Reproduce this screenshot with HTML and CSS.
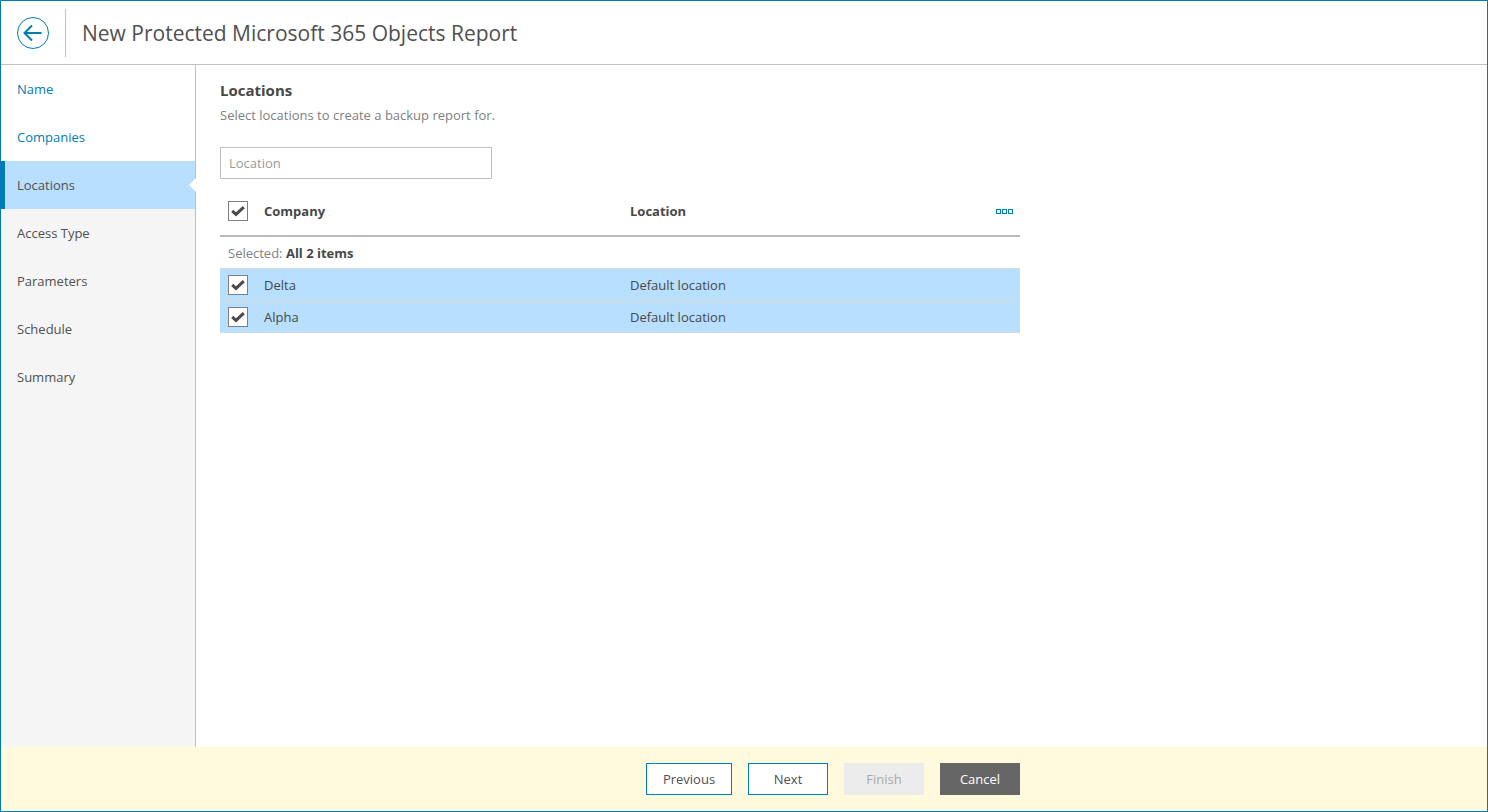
FILE: index.html
```html
<!DOCTYPE html>
<html>
<head lang="en">
    <meta charset="UTF-8">
    <title>New Protected Microsoft 365 Objects Report</title>

    <link rel="stylesheet" href="styles.css">
</head>
<body>

<div class="wizard">
    <div class="header">
        <div class="back">
            <svg width="32" height="32" viewBox="0 0 32 32">
                <circle cx="16" cy="16" r="15.5" fill="none" stroke="#007cb5" stroke-width="1"/>
                <path d="M8 16H24.5M15 8.5L7.5 16L15 23.5" fill="none" stroke="#007cb5" stroke-width="2"/>
            </svg>
        </div>
        <div class="title">New Protected Microsoft 365 Objects Report</div>
    </div>

    <div class="main">
        <div class="steps">
            <div class="step done">Name</div>
            <div class="step done">Companies</div>
            <div class="step active">Locations</div>
            <div class="step">Access Type</div>
            <div class="step">Parameters</div>
            <div class="step">Schedule</div>
            <div class="step">Summary</div>
        </div>

        <div class="content">
            <div class="heading">Locations</div>
            <div class="desc">Select locations to create a backup report for.</div>

            <div class="search">Location</div>

            <div class="grid">
                <div class="row head">
                    <div class="check-cell">
                        <span class="check">
                            <svg width="14" height="12" viewBox="0 0 14 12"><path d="M1.2 5.8L5 9.4L12.8 2.2" fill="none" stroke="#4a4a4a" stroke-width="3"/></svg>
                        </span>
                    </div>
                    <div class="col-company">Company</div>
                    <div class="col-location">Location</div>
                    <div class="col-menu">
                        <span class="dot"></span><span class="dot"></span><span class="dot"></span>
                    </div>
                </div>
                <div class="selected">Selected: <b>All 2 items</b></div>
                <div class="row item">
                    <div class="check-cell">
                        <span class="check">
                            <svg width="14" height="12" viewBox="0 0 14 12"><path d="M1.2 5.8L5 9.4L12.8 2.2" fill="none" stroke="#4a4a4a" stroke-width="3"/></svg>
                        </span>
                    </div>
                    <div class="col-company">Delta</div>
                    <div class="col-location">Default location</div>
                </div>
                <div class="row item">
                    <div class="check-cell">
                        <span class="check">
                            <svg width="14" height="12" viewBox="0 0 14 12"><path d="M1.2 5.8L5 9.4L12.8 2.2" fill="none" stroke="#4a4a4a" stroke-width="3"/></svg>
                        </span>
                    </div>
                    <div class="col-company">Alpha</div>
                    <div class="col-location">Default location</div>
                </div>
            </div>
        </div>
    </div>

    <div class="footer">
        <div class="buttons">
            <button class="btn prev">Previous</button>
            <button class="btn next">Next</button>
            <button class="btn finish">Finish</button>
            <button class="btn cancel">Cancel</button>
        </div>
    </div>
</div>

</body>
</html>
```

FILE: styles.css
```css
body, html {
    padding: 0;
    margin: 0;
}

body, html {
    width: 1488px;
    height: 812px;
    overflow: hidden;
}

body {
    font-family: "Open Sans", "Liberation Sans", sans-serif;
    font-size: 13px;
    color: #484848;
}

.wizard {
    width: 1488px;
    height: 812px;
    box-sizing: border-box;
    border: 1px solid #007cb5;
    display: flex;
    flex-direction: column;
    background-color: #fff;
}

.header {
    height: 64px;
    box-sizing: border-box;
    border-bottom: 1px solid #c0c0c0;
    display: flex;
    align-items: center;
    flex: none;
}

.back {
    width: 65px;
    height: 48px;
    box-sizing: border-box;
    padding: 8px 0 0 16px;
    border-right: 1px solid #c0c0c0;
    margin-top: 1px;
}

.back svg {
    display: block;
}

.title {
    font-size: 21px;
    color: #505050;
    margin-left: 16px;
    line-height: 30px;
}

.main {
    flex: 1;
    display: flex;
    min-height: 0;
}

.steps {
    width: 195px;
    box-sizing: border-box;
    border-right: 1px solid #c0c0c0;
    background-color: #f5f5f5;
    flex: none;
}

.step {
    height: 48px;
    line-height: 48px;
    padding-left: 16px;
    box-sizing: border-box;
    color: #505050;
}

.step.done {
    background-color: #fff;
    color: #007cb5;
}

.step.active {
    background-color: #b8dffe;
    border-left: 4px solid #007cb5;
    padding-left: 12px;
    position: relative;
    width: 194px;
}

/* little white notch pointing at the content */
.step.active:after {
    content: "";
    position: absolute;
    right: -1px;
    top: 17px;
    width: 0;
    height: 0;
    border-top: 7px solid transparent;
    border-bottom: 7px solid transparent;
    border-right: 7px solid #fff;
}

.content {
    flex: 1;
    padding: 14px 0 0 24px;
}

.heading {
    font-size: 15px;
    font-weight: 700;
    line-height: 22px;
    color: #484848;
}

.desc {
    color: #808080;
    line-height: 18px;
    margin-top: 5px;
}

.search {
    width: 272px;
    height: 32px;
    box-sizing: border-box;
    border: 1px solid #c0c0c0;
    margin-top: 23px;
    padding-left: 8px;
    line-height: 30px;
    color: #9a9a9a;
}

.grid {
    width: 800px;
    margin-top: 16px;
}

.row {
    display: flex;
    align-items: center;
}

.row.head {
    height: 42px;
    box-sizing: border-box;
    border-bottom: 2px solid #bdbdbd;
    font-weight: 700;
    padding-bottom: 8px;
}

.row.item {
    height: 32px;
    box-sizing: border-box;
    background-color: #b8dffe;
    border-bottom: 1px solid #d9d9d9;
}

.check-cell {
    width: 44px;
    padding-left: 8px;
    box-sizing: border-box;
    flex: none;
}

.check {
    width: 20px;
    height: 20px;
    box-sizing: border-box;
    border: 1px solid #7f7f7f;
    background-color: #fff;
    display: flex;
    align-items: center;
    justify-content: center;
}

.col-company {
    width: 366px;
    flex: none;
}

.col-location {
    flex: 1;
}

.col-menu {
    display: flex;
    gap: 1px;
    padding-right: 7px;
}

.dot {
    width: 5px;
    height: 5px;
    box-sizing: border-box;
    border: 1px solid #007cb5;
}

.selected {
    height: 32px;
    line-height: 31px;
    padding: 1px 0 0 8px;
    box-sizing: border-box;
    color: #808080;
    border-bottom: 1px solid #d9d9d9;
}

.selected b {
    color: #484848;
}

.footer {
    height: 64px;
    flex: none;
    background-color: #fffadd;
    display: flex;
    align-items: center;
}

.buttons {
    margin-left: 645px;
    display: flex;
    gap: 16px;
}

.btn {
    height: 32px;
    font-family: inherit;
    font-size: 13px;
    box-sizing: border-box;
    border: 1px solid #007cb5;
    background-color: #fff;
    color: #505050;
    padding: 0;
}

.prev {
    width: 86px;
}

.next {
    width: 80px;
}

.finish {
    width: 80px;
    background-color: #ececec;
    border-color: #ececec;
    color: #a8a8a8;
}

.cancel {
    width: 80px;
    background-color: #666;
    border-color: #666;
    color: #fff;
}
```
